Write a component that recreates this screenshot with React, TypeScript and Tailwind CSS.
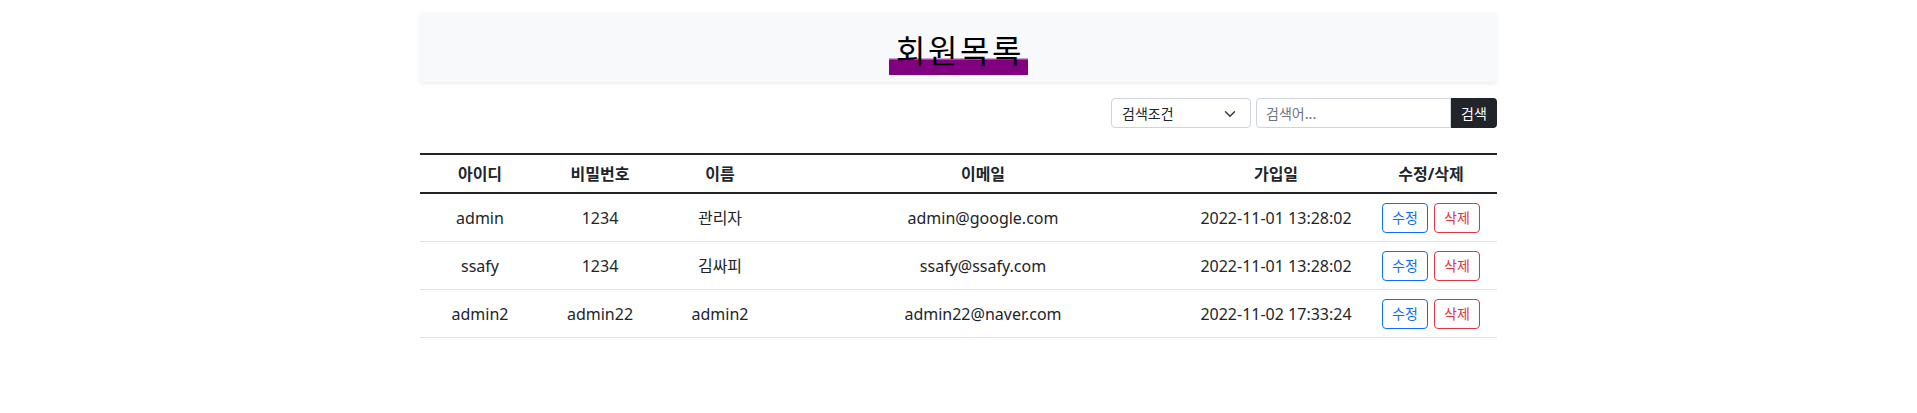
import React from "react";

const rows = [
  { id: "admin", pw: "1234", name: "관리자", email: "admin@google.com", date: "2022-11-01 13:28:02" },
  { id: "ssafy", pw: "1234", name: "김싸피", email: "ssafy@ssafy.com", date: "2022-11-01 13:28:02" },
  { id: "admin2", pw: "admin22", name: "admin2", email: "admin22@naver.com", date: "2022-11-02 17:33:24" },
];

const grid = "grid grid-cols-[120px_120px_120px_406px_180px_130px]";

export default function App() {
  return (
    <div className="min-h-[413px] bg-white text-[#212529] font-['Noto_Sans','Noto_Sans_CJK_KR',sans-serif]">
      <div className="w-[1077px] mx-auto pt-[12px]">
        <div className="h-[70px] bg-[#f8f9fa] rounded-[4px] shadow-[0_2px_4px_rgba(0,0,0,0.075)] flex justify-center items-start pt-[17px]">
          <h2 className="inline-block h-[46px] pl-[7px] pr-[4px] pb-[6px] text-[32px] leading-[40px] tracking-[2.5px] font-normal text-black bg-[linear-gradient(to_bottom,transparent_62%,#800080_68%)] font-['Noto_Sans_CJK_KR',sans-serif]">
            회원목록
          </h2>
        </div>

        <div className="mt-[16px] flex justify-end">
          <div className="relative w-[140px] h-[30px] border border-[#ced4da] rounded-[4px] flex items-center pl-[10px] text-[14px]">
            <span className="font-['Noto_Sans_CJK_KR',sans-serif]">검색조건</span>
            <svg className="absolute right-[14px] top-[10px]" width="12" height="10" viewBox="0 0 16 12" fill="none">
              <path d="M2 3l6 6 6-6" stroke="#343a40" strokeWidth="2" strokeLinecap="round" strokeLinejoin="round" />
            </svg>
          </div>
          <div className="ml-[5px] flex">
            <input
              placeholder="검색어..."
              className="w-[195px] h-[30px] border border-[#ced4da] rounded-l-[4px] px-[9px] text-[14px] placeholder:text-[#6c757d] outline-none font-['Noto_Sans_CJK_KR',sans-serif]"
            />
            <button className="w-[46px] h-[30px] bg-[#212529] text-white rounded-r-[4px] text-[14px] font-['Noto_Sans_CJK_KR',sans-serif]">
              검색
            </button>
          </div>
        </div>

        <div className="mt-[25px] border-t-2 border-[#212529]">
          <div className={`${grid} h-[39px] items-center font-bold text-[16px] border-b-2 border-[#212529]`}>
            {["아이디", "비밀번호", "이름", "이메일", "가입일", "수정/삭제"].map((h) => (
              <div key={h} className="flex justify-center whitespace-nowrap">{h}</div>
            ))}
          </div>
          {rows.map((r) => (
            <div key={r.id} className={`${grid} h-[48px] items-center text-[16px] border-b border-[#dee2e6]`}>
              <div className="flex justify-center whitespace-nowrap">{r.id}</div>
              <div className="flex justify-center whitespace-nowrap">{r.pw}</div>
              <div className="flex justify-center whitespace-nowrap">{r.name}</div>
              <div className="flex justify-center whitespace-nowrap">{r.email}</div>
              <div className="flex justify-center whitespace-nowrap">{r.date}</div>
              <div className="flex justify-center gap-[6px]">
                <button className="w-[46px] h-[30px] border border-[#0d6efd] text-[#0d6efd] rounded-[4px] text-[14px] leading-none">수정</button>
                <button className="w-[46px] h-[30px] border border-[#dc3545] text-[#dc3545] rounded-[4px] text-[14px] leading-none">삭제</button>
              </div>
            </div>
          ))}
        </div>
      </div>
    </div>
  );
}
